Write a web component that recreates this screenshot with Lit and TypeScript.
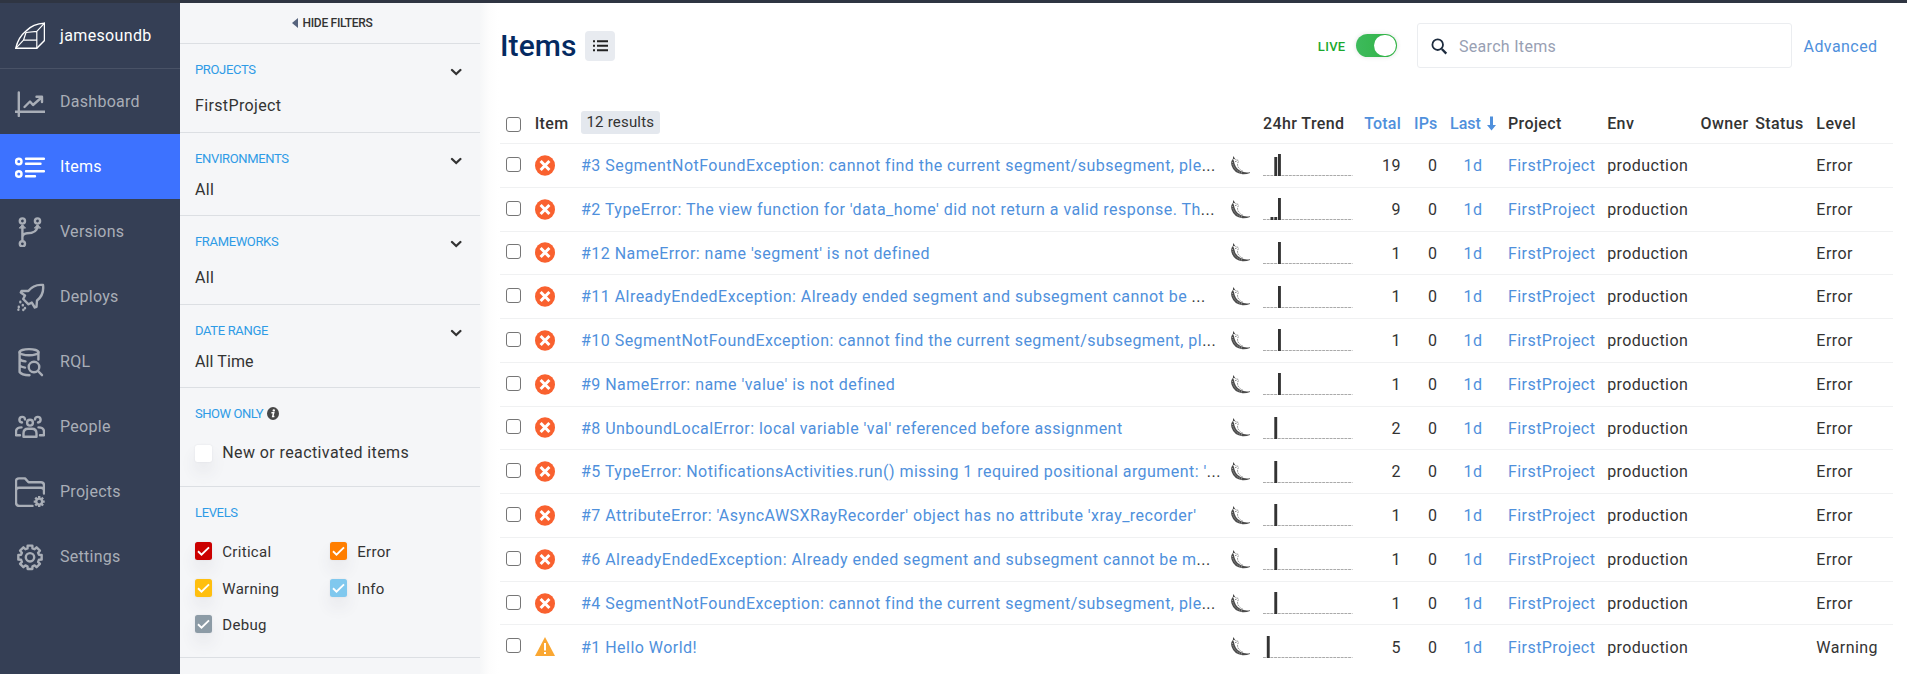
import { LitElement, html, svg, css, nothing } from "lit";
import { customElement } from "lit/decorators.js";
import { classMap } from "lit/directives/class-map.js";

const gear = (cx: number, cy: number, outer: number, inner: number) => {
  const pts: string[] = [];
  for (let i = 0; i < 8; i++) {
    const a = (i * Math.PI) / 4 - Math.PI / 2;
    for (const [off, r] of [[-0.27, inner], [-0.2, outer], [0.2, outer], [0.27, inner]]) {
      pts.push(`${(cx + Math.cos(a + off) * r).toFixed(2)} ${(cy + Math.sin(a + off) * r).toFixed(2)}`);
    }
  }
  return `M${pts.join("L")}Z`;
};

const icons: Record<string, unknown> = {
  Dashboard: svg`<path d="M3.8 5.5V29M0 24.8H30"/><path d="M9.5 20L15 14.5L18 18L26.5 10.5M21.5 9.8H27V15"/>`,
  Items: svg`<circle cx="3.8" cy="9.5" r="2.7"/><circle cx="3.8" cy="22" r="2.7"/><path d="M11 6.8H29M11 11.8H25.5M11 19.2H29M11 24.2H20"/>`,
  Versions: svg`<circle cx="7.4" cy="4" r="2.6"/><circle cx="22.5" cy="4" r="2.6"/><circle cx="7.4" cy="26.8" r="2.6"/><path d="M7.4 9V23.5M7.4 20Q8 16.5 12 16.3Q22 16.3 22.5 9"/><path d="M4.5 10.8L7.4 7.8L10.3 10.8ZM19.6 10.8L22.5 7.8L25.4 10.8Z" stroke-width="1" class="solid"/>`,
  Deploys: svg`<path d="M28 3C20.5 2.2 16.5 5 13.3 9L6.5 9L5.8 10.5L10 13.5L8.2 17L13.5 22.3L16.8 20.6L19.8 25.5L21.5 24.8L22 18.5C26.5 15 29 10.5 28 3Z"/><path d="M5.3 19.8V20.2M3.8 24.8V25.2M7.8 23V23.4M10 26V26.2M3.4 27.6V27.8M8.3 27.8V28"/>`,
  RQL: svg`<ellipse cx="14" cy="5.2" rx="9.4" ry="3.1"/><path d="M4.6 5.2V25Q6.5 28 14.5 28.3M23.4 5.2V12.5M4.6 12Q6 14 10.5 14.4M4.6 18.5Q6 20 10 20.6"/><circle cx="19" cy="20" r="5.3"/><path d="M23 24L27 28.2"/>`,
  People: svg`<circle cx="15" cy="10.7" r="2.9"/><path d="M8.5 24.8V21.5Q8.5 16.8 13 16.8H17Q21.5 16.8 21.5 21.5V24.8ZM1 23.3V19.5Q1 15.6 6.5 15.4M2 23.2H5M29 23.3V19.5Q29 15.6 23.5 15.4M28 23.2H25M10 7.5A2.8 2.8 0 1 0 7 10.5M20 7.5A2.8 2.8 0 1 1 23 10.5"/>`,
  Projects: svg`<path d="M17.5 29H4.5Q1 29 1 25.5V4.5Q1 1.4 4 1.4H10L13.5 5.2H26Q29 5.2 29 8.5V16.5M1 14V13.5Q1 10.7 4 10.7H26Q29 10.7 29 13.5"/><circle cx="24.2" cy="24.6" r="3" stroke-width="2.4"/><path stroke-width="2.4" stroke-linecap="butt" d="M24.2 19.1V21.5M24.2 27.7V30.1M18.7 24.6H21.1M27.3 24.6H29.7M20.3 20.7L22 22.4M26.4 26.8L28.1 28.5M20.3 28.5L22 26.8M26.4 22.4L28.1 20.7"/>`,
  Settings: svg`<path d="${gear(15, 15.3, 11.9, 9.3)}"/><circle cx="15" cy="15.3" r="4.2"/>`,
};

interface Item { n: number; text: string; cut?: boolean; bars: [number, number][]; total: number; level?: string }

const items: Item[] = [
  { n: 3, text: "SegmentNotFoundException: cannot find the current segment/subsegment, ple", cut: true, bars: [[3, 19], [4, 22]], total: 19 },
  { n: 2, text: "TypeError: The view function for 'data_home' did not return a valid response. Th", cut: true, bars: [[2, 3], [3, 3], [4, 22]], total: 9 },
  { n: 12, text: "NameError: name 'segment' is not defined", bars: [[4, 22]], total: 1 },
  { n: 11, text: "AlreadyEndedException: Already ended segment and subsegment cannot be ", cut: true, bars: [[4, 22]], total: 1 },
  { n: 10, text: "SegmentNotFoundException: cannot find the current segment/subsegment, pl", cut: true, bars: [[4, 22]], total: 1 },
  { n: 9, text: "NameError: name 'value' is not defined", bars: [[4, 22]], total: 1 },
  { n: 8, text: "UnboundLocalError: local variable 'val' referenced before assignment", bars: [[3, 22]], total: 2 },
  { n: 5, text: "TypeError: NotificationsActivities.run() missing 1 required positional argument: '", cut: true, bars: [[3, 22]], total: 2 },
  { n: 7, text: "AttributeError: 'AsyncAWSXRayRecorder' object has no attribute 'xray_recorder'", bars: [[3, 22]], total: 1 },
  { n: 6, text: "AlreadyEndedException: Already ended segment and subsegment cannot be m", cut: true, bars: [[3, 22]], total: 1 },
  { n: 4, text: "SegmentNotFoundException: cannot find the current segment/subsegment, ple", cut: true, bars: [[3, 22]], total: 1 },
  { n: 1, text: "Hello World!", bars: [[1, 22]], total: 5, level: "Warning" },
];

@customElement("side-nav")
class SideNav extends LitElement {
  static styles = css`
    :host { display: block; width: 180px; background: #353f55; color: #a9aeb7; font-size: 16px; letter-spacing: 0.28px; }
    .brand, .link { display: flex; align-items: center; height: 65px; padding-left: 15px; gap: 15px; }
    .brand { color: #fff; border-bottom: 1px solid #495266; letter-spacing: 0.36px; }
    .link.on { background: #3d72ff; color: #fff; }
    svg { width: 30px; height: 30px; fill: none; stroke: currentColor; stroke-width: 2.4; stroke-linecap: round; stroke-linejoin: round; flex: none; }
    .logo { stroke-width: 1.2; }
    .solid { fill: currentColor; }
  `;
  render() {
    return html`
      <div class="brand">
        <svg class="logo" viewBox="0 0 30 30"><path stroke-width="1.5" d="M0.8 27.3H21.8L29.5 19.5V2.2Q18 2.6 11 10Q3 16.5 0.8 27.3Z"/><path d="M21.8 27.3V10.3L29.5 2.2M21.8 10.3L11 11.5L8.5 19.2H21.8M8.5 19.2L0.8 27.3"/></svg>
        <span>jamesoundb</span>
      </div>
      ${Object.keys(icons).map((n) => html`<div class=${classMap({ link: true, on: n === "Items" })}>
        <svg viewBox="0 0 30 30">${icons[n]}</svg><span>${n}</span></div>`)}
    `;
  }
}

@customElement("filter-panel")
class FilterPanel extends LitElement {
  static styles = css`
    :host { display: block; width: 300px; background: #f5f6f8; color: #333; font-size: 16px; }
    section, .hide { box-sizing: border-box; border-bottom: 1px solid #dcdfe3; }
    .hide { height: 41px; display: flex; align-items: center; justify-content: center; gap: 5px; padding-left: 64px; padding-right: 60px; font-size: 12px; font-weight: 500; letter-spacing: -0.3px; white-space: nowrap; }
    .hide svg { width: 6px; height: 10px; fill: #57647e; }
    section { padding: 17px 18px 0 15px; height: 89px; }
    section.short { height: 83px; }
    section.only { height: 99px; }
    section.levels { height: 171px; }
    .label { display: flex; align-items: center; justify-content: space-between; height: 16px; color: #2e9be6; font-size: 13px; letter-spacing: -0.35px; }
    .label.start { justify-content: flex-start; gap: 4px; letter-spacing: -0.45px; }
    .chev { width: 12px; height: 8px; fill: none; stroke: #333; stroke-width: 2.3; stroke-linecap: round; margin-top: 5px; }
    .value { line-height: 20px; margin-top: 18.5px; letter-spacing: 0.36px; }
    .time { letter-spacing: 0.1px; }
    .short .value { margin-top: 14px; }
    .check { display: flex; align-items: center; gap: 10.3px; line-height: 20px; letter-spacing: 0.4px; }
    .only .check { margin-top: 22px; }
    .box { width: 17px; height: 17px; border-radius: 2.5px; background: #fff; box-shadow: 0 10px 16px rgba(60, 70, 90, 0.08), 0 0 2px rgba(60, 70, 90, 0.1); flex: none; display: block; }
    .grid { display: grid; grid-template-columns: 135px 1fr; grid-auto-rows: 36.5px; margin-top: 20px; font-size: 15px; }
    .grid .check { letter-spacing: 0.3px; align-items: flex-start; padding-top: 0; }
    .grid .box { width: 17px; height: 18px; margin-top: 2px; }
    .grid span { padding-top: 2px; }
    .Critical { background: #cb0000; }
    .Error { background: #ff7e00; }
    .Warning { background: #ffbf0f; }
    .Info { background: #80c8ee; }
    .Debug { background: #8c9ba6; }
  `;
  private group(label: string, value: string, short: boolean) {
    return html`<section class=${classMap({ short })}>
      <div class="label">${label}<svg class="chev" viewBox="0 0 12 8"><path d="M2 2L6.2 6L10.4 2"/></svg></div>
      <div class=${classMap({ value: true, time: value === "All Time" })}>${value}</div>
    </section>`;
  }
  render() {
    return html`
      <div class="hide"><svg viewBox="0 0 6 10"><path d="M6 0V10L0 5Z"/></svg>HIDE FILTERS</div>
      ${this.group("PROJECTS", "FirstProject", false)}
      ${this.group("ENVIRONMENTS", "All", true)}
      ${this.group("FRAMEWORKS", "All", false)}
      ${this.group("DATE RANGE", "All Time", true)}
      <section class="only">
        <div class="label start">SHOW ONLY
          <svg width="12" height="13" viewBox="0 0 12 13"><ellipse cx="6" cy="6.5" rx="6" ry="6.4" fill="#484848"/><circle cx="6.8" cy="3.4" r="1.2" fill="#fff"/><path d="M4.4 5.7H6.7L5.7 9.6H7.4" fill="none" stroke="#fff" stroke-width="1.5"/></svg>
        </div>
        <div class="check"><i class="box"></i>New or reactivated items</div>
      </section>
      <section class="levels">
        <div class="label">LEVELS</div>
        <div class="grid">${["Critical", "Error", "Warning", "Info", "Debug"].map((l) => html`<div class="check">
          <svg class="box ${l}" viewBox="0 0 17 18"><path d="M3 9.3L6.5 12.6L14 5.4" fill="none" stroke="#fff" stroke-width="1.9"/></svg><span>${l}</span></div>`)}</div>
      </section>
    `;
  }
}

@customElement("items-page")
class ItemsPage extends LitElement {
  static styles = css`
    :host { display: block; flex: 1; min-width: 0; padding: 0 14px 0 20px; background: linear-gradient(90deg, #f6f7f8, #fdfdfd 9px, #fff 19px); color: #333; font-size: 16px; letter-spacing: 0.44px; }
    .top { display: flex; align-items: center; height: 85px; }
    h1 { margin: 0 8px 0 0; font-size: 30px; font-weight: 500; letter-spacing: 0.1px; color: #052a61; }
    .btn { width: 30px; height: 30px; border-radius: 4px; background: #e8ebf0; }
    .live { margin-left: auto; color: #1ba92f; font-size: 13px; font-weight: 500; letter-spacing: 0.3px; padding-top: 1px; }
    .toggle { box-sizing: border-box; width: 41px; height: 23px; margin: 0 20px 0 10.5px; padding: 1px; border-radius: 12px; background: linear-gradient(90deg, #3dba5c, #2fb242); box-shadow: 0 0 5px rgba(0, 0, 0, 0.12); display: flex; justify-content: flex-end; }
    .knob { width: 22px; height: 21px; border-radius: 11px; background: #fff; }
    .search { box-sizing: border-box; width: 375px; height: 45px; border: 1px solid #ebedf0; border-radius: 3px; display: flex; align-items: center; gap: 11px; padding: 1px 0 0 13px; color: #98a0b3; letter-spacing: 0.3px; }
    .adv { width: 88.5px; margin-left: 11.5px; margin-right: 1px; padding-top: 1px; }
    .blue, .adv { color: #4f90dc; }
    .row { display: grid; grid-template-columns: 34.7px 46.3px 649.5px 32.5px 90px 48px 36.5px 70.5px 99.2px 93.3px 54.7px 61.2px 76.3px; height: 42.77px; align-items: center; border-bottom: 1px solid #f0f1f2; }
    .row:last-child { border: 0; }
    .head { height: 55px; font-weight: 500; letter-spacing: 0.4px; align-items: start; }
    .head > * { margin-top: 25.5px; line-height: 19px; }
    .cb { box-sizing: border-box; width: 15px; height: 15px; margin: -2px 0 0 6px; border: 1px solid #767676; border-radius: 3px; background: #fff; }
    .head .cb { margin-top: 29px; }
    .head .pill { display: inline-block; margin-top: 23px; padding: 0 5.5px; background: #e4e8ee; border-radius: 3px; font-size: 15px; font-weight: 400; line-height: 23px; letter-spacing: 0.2px; justify-self: start; }
    .r { text-align: right; }
    .head .r { letter-spacing: 0.2px; }
    .last { padding-left: 12.5px; display: flex; gap: 6px; align-items: center; letter-spacing: 0; }
    .day { padding-left: 26px; }
    .title { white-space: nowrap; letter-spacing: 0.465px; }
    .title, .cell { padding-top: 0.4px; }
    svg { display: block; }
    .trend { align-self: end; margin-bottom: 9.5px; }
  `;
  private level(i: Item) {
    return i.level
      ? html`<svg width="20" height="19" viewBox="0 0 20 19"><path d="M10 0L20 19H0Z" fill="#faa732"/><path d="M9 6H11V13.5H9ZM9 15H11V17H9Z" fill="#fff"/></svg>`
      : html`<svg width="20" height="21" viewBox="0 0 20 21"><ellipse cx="10" cy="10.5" rx="10" ry="10.3" fill="#f9612f"/><path d="M5.6 6L14.4 15M14.4 6L5.6 15" stroke="#fff" stroke-width="3"/></svg>`;
  }
  private banana() {
    return html`<svg width="21" height="19" viewBox="0 0 21 19"><path d="M3.4 0L2.9 2.8L5.2 3.2Z" fill="#333"/><path d="M3 2.8Q0.2 5.5 1.6 9.8Q4 17.4 12.5 18.2Q16.5 18.4 20 17V16.2Q14.5 17 10.5 15Q4.8 11.8 4 5.2Z" fill="#4a4a4a"/><path d="M2.4 6Q3 10.5 6 13.6Q8.5 16 12 17" fill="none" stroke="#ccc" stroke-width=".8" stroke-dasharray="1 1.4"/><path d="M4.5 2.6Q6 4.2 9 4.4M8.4 5.6Q6.6 9 8.6 11.8Q10.6 14.6 14 15.6M5 5.5L7 5.2" fill="none" stroke="#777" stroke-width=".9" stroke-dasharray="1.6 1"/></svg>`;
  }
  private row(i: Item) {
    return html`<div class="row">
      <i class="cb"></i>${this.level(i)}
      <span class="title"><span class="blue">#${i.n} ${i.text}</span>${i.cut ? "..." : nothing}</span>
      ${this.banana()}
      <svg class="trend" width="90" height="23" viewBox="0 0 90 23"><path d="M0 21.5H89.5" stroke="#aaa" stroke-dasharray="2.9 .8"/>
        ${i.bars.map(([x, h]) => svg`<rect x=${(x * 3.75).toFixed(1)} y=${22 - h} width="2.9" height=${h} fill="#333"/>`)}</svg>
      <span class="r cell">${i.total}</span><span class="r cell">0</span>
      <span class="blue day cell">1d</span><span class="blue cell">FirstProject</span>
      <span class="cell">production</span><i></i><i></i><span class="cell">${i.level ?? "Error"}</span>
    </div>`;
  }
  render() {
    return html`
      <div class="top">
        <h1>Items</h1>
        <svg class="btn" viewBox="0 0 30 30"><path d="M12 10.2H23M12 14.7H23M12 19.2H23" stroke="#222" stroke-width="1.9"/><path d="M8 10.2H10M8 14.7H10M8 19.2H10" stroke="#222" stroke-width="2"/></svg>
        <span class="live">LIVE</span><div class="toggle"><i class="knob"></i></div>
        <div class="search"><svg width="17" height="17" viewBox="0 0 17 17" fill="none" stroke="#1d2b3e"><circle cx="6.7" cy="6.7" r="5.3" stroke-width="1.8"/><path d="M10.8 11L15.3 15.6" stroke-width="2.3"/></svg>Search Items</div>
        <span class="adv">Advanced</span>
      </div>
      <div class="row head">
        <i class="cb"></i><span>Item</span><span class="pill">12 results</span><i></i><span>24hr Trend</span>
        <span class="r blue">Total</span><span class="r blue">IPs</span>
        <span class="last blue">Last<svg width="9" height="15" viewBox="0 0 9 15"><path d="M3 0.5H6V9H9L4.5 14.5L0 9H3Z" fill="#4f90dc"/></svg></span>
        <span>Project</span><span>Env</span><span>Owner</span><span>Status</span><span>Level</span>
      </div>
      ${items.map((i) => this.row(i))}
    `;
  }
}

@customElement("app-root")
class AppRoot extends LitElement {
  static styles = css`
    :host { display: flex; box-sizing: border-box; height: 674px; overflow: hidden; border-top: 3px solid #2f3542; font-family: Roboto, "Liberation Sans", sans-serif; background: #fff; }
  `;
  render() {
    return html`<side-nav></side-nav><filter-panel></filter-panel><items-page></items-page>`;
  }
}
